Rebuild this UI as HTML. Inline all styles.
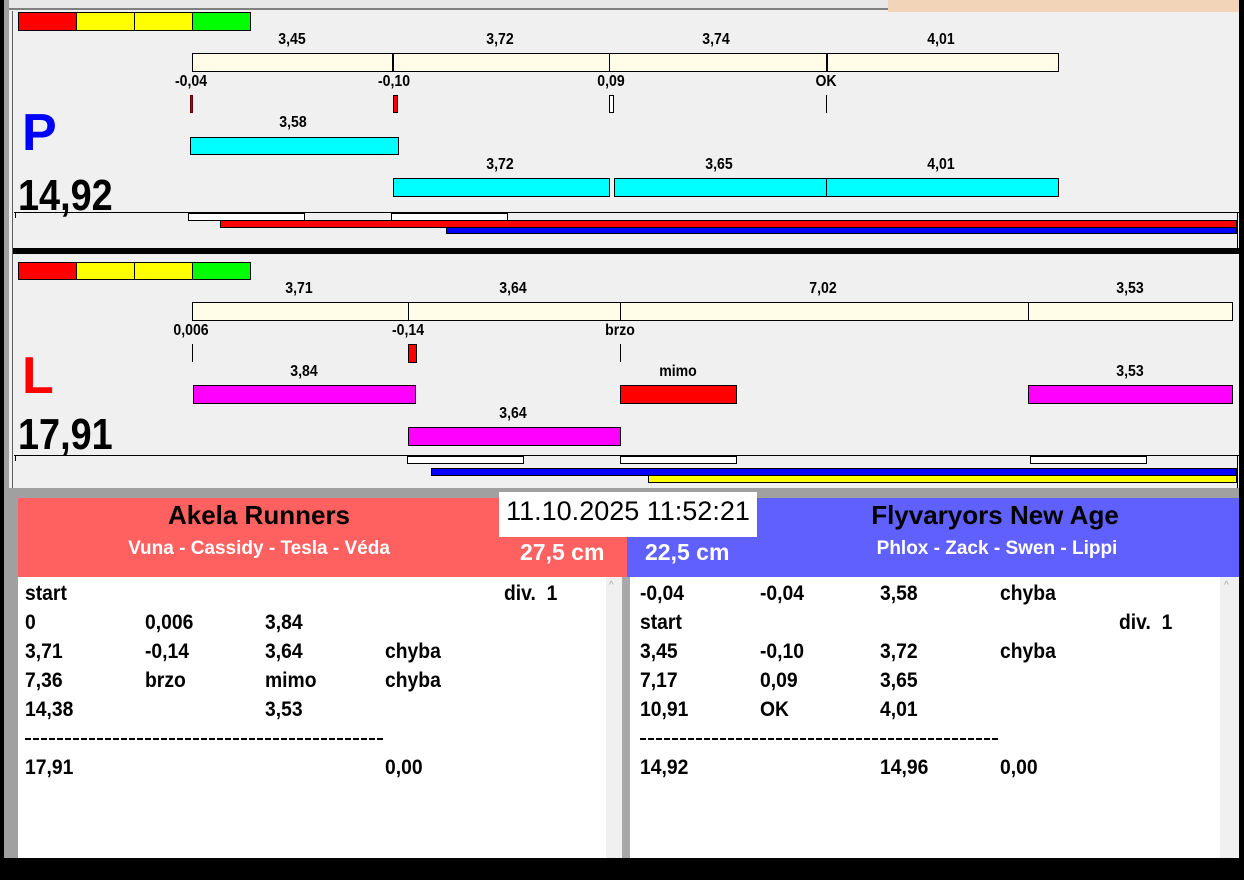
<!DOCTYPE html>
<html><head><meta charset="utf-8"><style>
*{margin:0;padding:0;box-sizing:border-box}
body{width:1244px;height:880px;overflow:hidden;background:#f0f0f0;position:relative;font-family:"Liberation Sans",sans-serif;font-weight:bold}
div{position:absolute}
.l{font-size:16px;color:#000;transform:translateX(-50%) scaleX(0.88);white-space:nowrap;line-height:16px}
.b{border:1px solid #000}
.cr{background:#fffde8}
.cy{background:#00ffff}
.mg{background:#ff00ff}
.rd{background:#ff0000}
.wb{background:#fff;border:1px solid #000}
.row{font-size:21px;line-height:21px;white-space:nowrap;transform:scaleX(0.92);transform-origin:left}
.big{font-size:44px;line-height:48px;transform:scaleX(0.86);transform-origin:left}
.dash{height:2px;width:360px;background:repeating-linear-gradient(90deg,#000 0 6px,transparent 6px 8px)}
</style></head><body>
<div style="left:0;top:0;width:4px;height:880px;background:#000"></div>
<div style="left:4px;top:0;width:5px;height:880px;background:#a0a0a0"></div>
<div style="left:1239px;top:0;width:5px;height:880px;background:#000"></div>
<div style="left:9px;top:0;width:880px;height:10px;background:#e8e8e8;border-bottom:2px solid #808080"></div>
<div style="left:888px;top:0;width:351px;height:12px;background:#f2d4b8"></div>
<div style="left:12px;top:11px;width:1px;height:477px;background:#606060"></div>

<!-- P panel -->
<div class="b" style="left:18px;top:12px;width:59px;height:19px;background:#f00"></div>
<div class="b" style="left:76px;top:12px;width:59px;height:19px;background:#ff0"></div>
<div class="b" style="left:134px;top:12px;width:59px;height:19px;background:#ff0"></div>
<div class="b" style="left:192px;top:12px;width:59px;height:19px;background:#0f0"></div>

<div class="l" style="left:292px;top:32px">3,45</div>
<div class="l" style="left:500px;top:32px">3,72</div>
<div class="l" style="left:716px;top:32px">3,74</div>
<div class="l" style="left:941px;top:32px">4,01</div>
<div class="b cr" style="left:192px;top:53px;width:867px;height:19px"></div>
<div style="left:392px;top:53px;width:2px;height:19px;background:#000"></div>
<div style="left:609px;top:53px;width:1px;height:19px;background:#000"></div>
<div style="left:826px;top:53px;width:2px;height:19px;background:#000"></div>
<div class="l" style="left:191px;top:74px">-0,04</div>
<div class="l" style="left:394px;top:74px">-0,10</div>
<div class="l" style="left:611px;top:74px">0,09</div>
<div class="l" style="left:826px;top:74px">OK</div>
<div style="left:190px;top:95px;width:3px;height:18px;background:#c00000;border:1px solid #600"></div>
<div class="b rd" style="left:393px;top:95px;width:5px;height:18px"></div>
<div class="wb" style="left:609px;top:95px;width:5px;height:18px"></div>
<div style="left:826px;top:95px;width:1px;height:18px;background:#000"></div>
<div style="left:22px;top:103px;font-size:52px;line-height:60px;color:#0000ff">P</div>
<div class="l" style="left:293px;top:115px">3,58</div>
<div class="b cy" style="left:190px;top:137px;width:209px;height:18px"></div>
<div class="l" style="left:500px;top:157px">3,72</div>
<div class="l" style="left:719px;top:157px">3,65</div>
<div class="l" style="left:941px;top:157px">4,01</div>
<div class="b cy" style="left:393px;top:178px;width:217px;height:19px"></div>
<div class="b cy" style="left:614px;top:178px;width:445px;height:19px"></div>
<div style="left:826px;top:178px;width:1px;height:19px;background:#000"></div>
<div class="big" style="left:18px;top:172px">14,92</div>
<div style="left:14px;top:212px;width:1225px;height:1px;background:#000"></div>
<div style="left:15px;top:212px;width:1px;height:6px;background:#000"></div>
<div style="left:1237px;top:212px;width:1px;height:36px;background:#000"></div>
<div class="wb" style="left:188px;top:213px;width:117px;height:8px"></div>
<div class="wb" style="left:391px;top:213px;width:117px;height:8px"></div>
<div class="b" style="left:220px;top:220px;width:1017px;height:8px;background:#f00"></div>
<div class="b" style="left:446px;top:227px;width:791px;height:7px;background:#00f"></div>
<div style="left:13px;top:248px;width:1226px;height:6px;background:#000"></div>

<!-- L panel -->
<div class="b" style="left:18px;top:262px;width:59px;height:18px;background:#f00"></div>
<div class="b" style="left:76px;top:262px;width:59px;height:18px;background:#ff0"></div>
<div class="b" style="left:134px;top:262px;width:59px;height:18px;background:#ff0"></div>
<div class="b" style="left:192px;top:262px;width:59px;height:18px;background:#0f0"></div>
<div class="l" style="left:299px;top:281px">3,71</div>
<div class="l" style="left:513px;top:281px">3,64</div>
<div class="l" style="left:823px;top:281px">7,02</div>
<div class="l" style="left:1130px;top:281px">3,53</div>
<div class="b cr" style="left:192px;top:302px;width:1041px;height:19px"></div>
<div style="left:408px;top:302px;width:1px;height:19px;background:#000"></div>
<div style="left:620px;top:302px;width:1px;height:19px;background:#000"></div>
<div style="left:1028px;top:302px;width:1px;height:19px;background:#000"></div>
<div class="l" style="left:191px;top:323px">0,006</div>
<div class="l" style="left:408px;top:323px">-0,14</div>
<div class="l" style="left:620px;top:323px">brzo</div>
<div style="left:192px;top:344px;width:1px;height:18px;background:#000"></div>
<div class="b rd" style="left:408px;top:344px;width:9px;height:19px"></div>
<div style="left:620px;top:344px;width:1px;height:18px;background:#000"></div>
<div style="left:22px;top:348px;font-size:52px;line-height:56px;color:#ff0000">L</div>
<div class="l" style="left:304px;top:364px">3,84</div>
<div class="l" style="left:678px;top:364px">mimo</div>
<div class="l" style="left:1130px;top:364px">3,53</div>
<div class="b mg" style="left:193px;top:385px;width:223px;height:19px"></div>
<div class="b rd" style="left:620px;top:385px;width:117px;height:19px"></div>
<div class="b mg" style="left:1028px;top:385px;width:205px;height:19px"></div>
<div class="l" style="left:513px;top:406px">3,64</div>
<div class="b mg" style="left:408px;top:427px;width:213px;height:19px"></div>
<div class="big" style="left:18px;top:411px">17,91</div>
<div style="left:14px;top:455px;width:1225px;height:1px;background:#000"></div>
<div style="left:15px;top:455px;width:1px;height:6px;background:#000"></div>
<div style="left:1237px;top:455px;width:1px;height:33px;background:#000"></div>
<div class="wb" style="left:407px;top:456px;width:117px;height:8px"></div>
<div class="wb" style="left:620px;top:456px;width:117px;height:8px"></div>
<div class="wb" style="left:1030px;top:456px;width:117px;height:8px"></div>
<div class="b" style="left:431px;top:468px;width:806px;height:8px;background:#00f"></div>
<div class="b" style="left:648px;top:475px;width:589px;height:8px;background:#ff0"></div>

<!-- bottom -->
<div style="left:9px;top:488px;width:1230px;height:10px;background:#a0a0a0"></div>
<div style="left:9px;top:498px;width:9px;height:360px;background:#a0a0a0"></div>
<div style="left:18px;top:498px;width:609px;height:79px;background:#ff6060"></div>
<div style="left:627px;top:498px;width:612px;height:79px;background:#6060ff"></div>
<div style="left:18px;top:500px;width:482px;text-align:center;font-size:26px;line-height:30px;color:#000">Akela Runners</div>
<div style="left:18px;top:538px;width:482px;text-align:center;font-size:19px;line-height:22px;color:#fff">Vuna - Cassidy - Tesla - Véda</div>
<div style="left:520px;top:539px;font-size:23px;line-height:26px;color:#fff">27,5 cm</div>
<div style="left:645px;top:539px;font-size:23px;line-height:26px;color:#fff">22,5 cm</div>
<div style="left:757px;top:500px;width:476px;text-align:center;font-size:26px;line-height:30px;color:#000">Flyvaryors New Age</div>
<div style="left:757px;top:538px;width:480px;text-align:center;font-size:19px;line-height:22px;color:#fff">Phlox - Zack - Swen - Lippi</div>
<div style="left:499px;top:492px;width:258px;height:45px;background:#fff"></div>
<div style="left:499px;top:495px;width:258px;text-align:center;font-weight:normal;font-size:27px;line-height:32px">11.10.2025 11:52:21</div>

<div style="left:18px;top:577px;width:588px;height:281px;background:#fff"></div>
<div style="left:606px;top:577px;width:16px;height:281px;background:#f0f0f0"></div>
<div style="left:609px;top:580px;font-size:10px;color:#aaa;font-weight:normal">^</div>
<div style="left:622px;top:577px;width:8px;height:281px;background:#a8a8a8"></div>
<div style="left:630px;top:577px;width:590px;height:281px;background:#fff"></div>
<div style="left:1220px;top:577px;width:19px;height:281px;background:#f0f0f0"></div>
<div style="left:1224px;top:580px;font-size:10px;color:#aaa;font-weight:normal">^</div>

<div class="row" style="left:25px;top:583px">start</div><div class="row" style="left:504px;top:583px">div.&nbsp; 1</div>
<div class="row" style="left:25px;top:612px">0</div><div class="row" style="left:145px;top:612px">0,006</div><div class="row" style="left:265px;top:612px">3,84</div>
<div class="row" style="left:25px;top:641px">3,71</div><div class="row" style="left:145px;top:641px">-0,14</div><div class="row" style="left:265px;top:641px">3,64</div><div class="row" style="left:385px;top:641px">chyba</div>
<div class="row" style="left:25px;top:670px">7,36</div><div class="row" style="left:145px;top:670px">brzo</div><div class="row" style="left:265px;top:670px">mimo</div><div class="row" style="left:385px;top:670px">chyba</div>
<div class="row" style="left:25px;top:699px">14,38</div><div class="row" style="left:265px;top:699px">3,53</div>
<div class="dash" style="left:25px;top:738px"></div>
<div class="row" style="left:25px;top:757px">17,91</div><div class="row" style="left:385px;top:757px">0,00</div>

<div class="row" style="left:640px;top:583px">-0,04</div><div class="row" style="left:760px;top:583px">-0,04</div><div class="row" style="left:880px;top:583px">3,58</div><div class="row" style="left:1000px;top:583px">chyba</div>
<div class="row" style="left:640px;top:612px">start</div><div class="row" style="left:1119px;top:612px">div.&nbsp; 1</div>
<div class="row" style="left:640px;top:641px">3,45</div><div class="row" style="left:760px;top:641px">-0,10</div><div class="row" style="left:880px;top:641px">3,72</div><div class="row" style="left:1000px;top:641px">chyba</div>
<div class="row" style="left:640px;top:670px">7,17</div><div class="row" style="left:760px;top:670px">0,09</div><div class="row" style="left:880px;top:670px">3,65</div>
<div class="row" style="left:640px;top:699px">10,91</div><div class="row" style="left:760px;top:699px">OK</div><div class="row" style="left:880px;top:699px">4,01</div>
<div class="dash" style="left:640px;top:738px"></div>
<div class="row" style="left:640px;top:757px">14,92</div><div class="row" style="left:880px;top:757px">14,96</div><div class="row" style="left:1000px;top:757px">0,00</div>

<div style="left:0;top:858px;width:1244px;height:22px;background:#000"></div>
</body></html>
